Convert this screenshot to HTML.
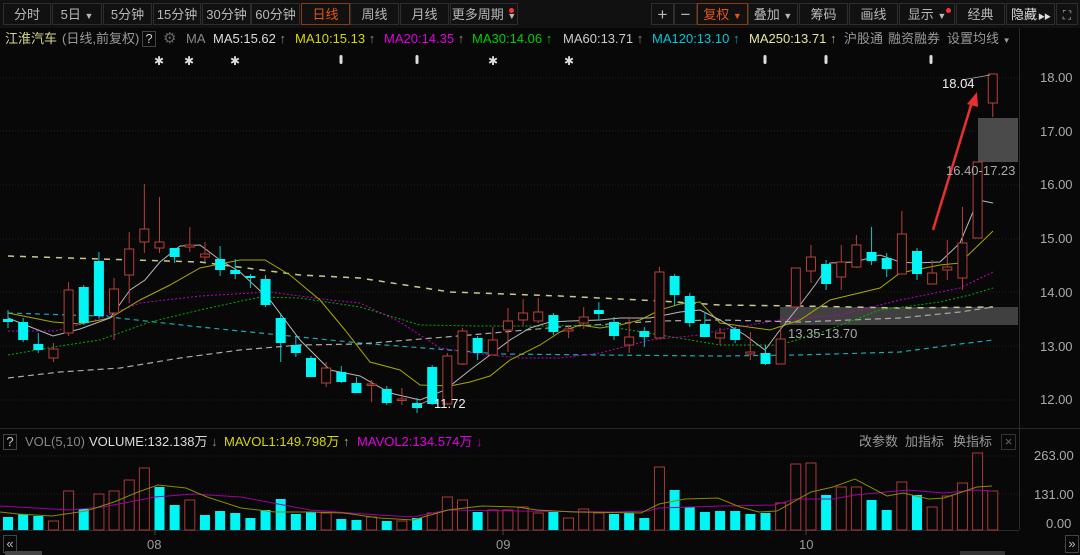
<!DOCTYPE html>
<html><head><meta charset="utf-8">
<style>
html,body{margin:0;padding:0;background:#080808;width:1080px;height:555px;overflow:hidden;font-family:"Liberation Sans","Noto Sans CJK SC",sans-serif;}
#c{position:absolute;left:0;top:0}
.tb{position:absolute;top:3px;height:22px;border:1px solid #2e2e2e;background:#111;color:#b8b8b8;font-size:13px;line-height:22px;text-align:center;box-sizing:border-box;white-space:nowrap;overflow:hidden}
.act{border-color:#8a3a10;color:#e0561a}
.t{position:absolute;font-size:13px;white-space:nowrap;line-height:16px}
</style></head><body>
<svg id="c" width="1080" height="555" xmlns="http://www.w3.org/2000/svg"></svg>

<div class="tb" style="left:3px;width:48px">分时</div>
<div class="tb" style="left:52px;width:50px">5日 <span style="font-size:9px">▼</span></div>
<div class="tb" style="left:103px;width:49px">5分钟</div>
<div class="tb" style="left:153px;width:48px">15分钟</div>
<div class="tb" style="left:202px;width:49px">30分钟</div>
<div class="tb" style="left:251px;width:49px">60分钟</div>
<div class="tb act" style="left:301px;width:49px">日线</div>
<div class="tb" style="left:350px;width:49px">周线</div>
<div class="tb" style="left:400px;width:49px">月线</div>
<div class="tb" style="left:450px;width:68px">更多周期 <span style="font-size:9px">▼</span><span style="position:absolute;right:3px;top:4px;width:5px;height:5px;border-radius:3px;background:#f33"></span></div>
<div class="tb" style="left:651px;width:23px;font-size:17px">+</div>
<div class="tb" style="left:674px;width:23px;font-size:17px">−</div>
<div class="tb act" style="left:697px;width:51px">复权 <span style="font-size:9px">▼</span></div>
<div class="tb" style="left:748px;width:50px">叠加 <span style="font-size:9px">▼</span></div>
<div class="tb" style="left:799px;width:49px">筹码</div>
<div class="tb" style="left:849px;width:49px">画线</div>
<div class="tb" style="left:899px;width:56px">显示 <span style="font-size:9px">▼</span><span style="position:absolute;right:3px;top:4px;width:5px;height:5px;border-radius:3px;background:#f33"></span></div>
<div class="tb" style="left:956px;width:49px">经典</div>
<div class="tb" style="left:1006px;width:49px;color:#ddd;text-align:left;padding-left:4px">隐藏<span style="font-size:7px;letter-spacing:-1px"> ▶▶</span></div>
<div class="tb" style="left:1056px;width:22px;font-size:12px">⛶</div>

<div class="t" style="left:5px;top:31px;color:#d6d68a">江淮汽车</div>
<div class="t" style="left:62px;top:31px;color:#9a9a9a">(日线,前复权)</div>
<div class="t" style="left:142px;top:31px;color:#ccc;border:1px solid #444;width:12px;text-align:center;line-height:14px">?</div>
<div class="t" style="left:163px;top:31px;color:#666;font-size:15px">⚙</div>
<div class="t" style="left:186px;top:31px;color:#888">MA</div>
<div class="t" style="left:213px;top:31px;color:#ddd">MA5:15.62 <span style="color:#888">↑</span></div>
<div class="t" style="left:295px;top:31px;color:#d8d800">MA10:15.13 <span style="color:#888">↑</span></div>
<div class="t" style="left:384px;top:31px;color:#e000e0">MA20:14.35 <span style="color:#888">↑</span></div>
<div class="t" style="left:472px;top:31px;color:#00d000">MA30:14.06 <span style="color:#0c0">↑</span></div>
<div class="t" style="left:563px;top:31px;color:#ccc">MA60:13.71 <span style="color:#888">↑</span></div>
<div class="t" style="left:652px;top:31px;color:#00c8d8">MA120:13.10 <span style="color:#0aa">↑</span></div>
<div class="t" style="left:749px;top:31px;color:#e8e890">MA250:13.71 <span style="color:#aa8">↑</span></div>
<div class="t" style="left:844px;top:31px;color:#999">沪股通</div>
<div class="t" style="left:888px;top:31px;color:#999">融资融券</div>
<div class="t" style="left:947px;top:31px;color:#999">设置均线 <span style="font-size:8px">▼</span></div>

<div class="t" style="left:942px;top:76px;color:#eee">18.04</div>
<div class="t" style="left:946px;top:163px;color:#aaa">16.40-17.23</div>
<div class="t" style="left:788px;top:326px;color:#aaa">13.35-13.70</div>
<div class="t" style="left:434px;top:396px;color:#eee">11.72</div>

<div class="t" style="left:1040px;top:70px;color:#aaa">18.00</div>
<div class="t" style="left:1040px;top:124px;color:#aaa">17.00</div>
<div class="t" style="left:1040px;top:177px;color:#aaa">16.00</div>
<div class="t" style="left:1040px;top:231px;color:#aaa">15.00</div>
<div class="t" style="left:1040px;top:285px;color:#aaa">14.00</div>
<div class="t" style="left:1040px;top:339px;color:#aaa">13.00</div>
<div class="t" style="left:1040px;top:392px;color:#aaa">12.00</div>

<div class="t" style="left:3px;top:434px;color:#ccc;border:1px solid #444;width:12px;text-align:center;line-height:14px">?</div>
<div class="t" style="left:25px;top:434px;color:#888">VOL(5,10)</div>
<div class="t" style="left:89px;top:434px;color:#ddd">VOLUME:132.138万 <span style="color:#888">↓</span></div>
<div class="t" style="left:224px;top:434px;color:#d8d800">MAVOL1:149.798万 <span style="color:#aa8">↑</span></div>
<div class="t" style="left:357px;top:434px;color:#e000e0">MAVOL2:134.574万 <span style="color:#a0a">↓</span></div>
<div class="t" style="left:859px;top:434px;color:#999">改参数</div>
<div class="t" style="left:905px;top:434px;color:#999">加指标</div>
<div class="t" style="left:953px;top:434px;color:#999">换指标</div>
<div class="t" style="left:1001px;top:434px;color:#666;border:1px solid #333;width:13px;text-align:center;line-height:14px">×</div>
<div class="t" style="left:1034px;top:448px;color:#aaa">263.00</div>
<div class="t" style="left:1034px;top:487px;color:#aaa">131.00</div>
<div class="t" style="left:1046px;top:516px;color:#aaa">0.00</div>
<div class="t" style="left:147px;top:537px;color:#999">08</div>
<div class="t" style="left:496px;top:537px;color:#999">09</div>
<div class="t" style="left:799px;top:537px;color:#999">10</div>
<div class="t" style="left:3px;top:535px;color:#bbb;border:1px solid #444;width:12px;text-align:center">«</div>
<div class="t" style="left:1065px;top:535px;color:#bbb;border:1px solid #444;width:12px;text-align:center">»</div>

<script>
var S='';
function L(x1,y1,x2,y2,c,w,d){S+='<line x1="'+x1+'" y1="'+y1+'" x2="'+x2+'" y2="'+y2+'" stroke="'+c+'" stroke-width="'+(w||1)+'"'+(d?' stroke-dasharray="'+d+'"':'')+'/>';}
function P(pts,c,w,d){S+='<polyline fill="none" points="'+pts.map(function(p){return p.join(',')}).join(' ')+'" stroke="'+c+'" stroke-width="'+(w||1)+'"'+(d?' stroke-dasharray="'+d+'"':'')+'/>';}
S+='<rect x="0" y="0" width="1080" height="28" fill="#111"/>';
[78,131,185,239,292,346,400].forEach(function(y){L(0,y,1019,y,'#222',1,'1 2');});
[456,494].forEach(function(y){L(0,y,1019,y,'#222',1,'1 2');});
L(1019.5,28,1019.5,530,'#2a2a2a');
L(0,428.5,1080,428.5,'#2a2a2a');
L(0,530.5,1019,530.5,'#2a2a2a');
[155,503,806].forEach(function(x){L(x,530,x,535,'#444');});
S+='<rect x="5" y="551" width="37" height="4" fill="#444"/><rect x="960" y="551" width="45" height="4" fill="#333"/>';
S+='<rect x="780" y="307" width="238" height="18" fill="#4a4a4a" opacity="0.85"/>';
S+='<rect x="978" y="118" width="40" height="44" fill="#4a4a4a"/>';
P([[8,256],[100,259],[200,262],[300,275],[360,278],[450,292],[560,296],[660,301],[720,305],[800,306],[900,308],[993,307]],'#c8c890',1.5,'6 6');
P([[8,313],[100,316],[200,327],[300,337],[360,343],[500,354],[600,355],[720,356],[800,355],[900,352],[960,344],[993,340]],'#1aa8b8',1.2,'5 4');
P([[8,378],[60,372],[120,368],[180,358],[240,350],[300,345],[360,344],[470,335],[560,327],[660,321],[720,320],[800,322],[900,318],[960,312],[993,307]],'#aaa',1.2,'6 4');
P([[8,355],[60,346],[100,340],[150,322],[200,310],[260,297],[300,298],[360,307],[420,325],[480,326],[540,326],[600,325],[660,335],[720,345],[780,345],[820,333],[880,310],[940,302],[970,295],[993,288]],'#00b000',1,'2 2');
P([[8,331],[55,331],[90,322],[140,303],[200,296],[270,292],[330,300],[360,303],[400,322],[440,348],[480,354],[520,358],[560,358],[600,353],[650,340],[700,335],[720,330],[780,320],[840,315],[900,300],[960,288],[993,272]],'#c000c0',1,'2 2');
P([[8,313],[53,322],[80,324],[110,318],[140,300],[170,285],[200,268],[240,260],[265,260],[290,275],[320,300],[345,330],[370,362],[400,370],[420,385],[450,386],[470,382],[490,376],[510,360],[540,345],[560,332],[580,325],[600,328],[620,325],[640,320],[660,310],[680,304],[700,302],[720,323],[770,330],[800,320],[830,300],[880,288],[900,273],[940,265],[960,263],[993,231]],'#a8a800',1);
P([[8,318],[53,336],[80,329],[110,318],[130,290],[145,280],[160,262],[180,246],[200,245],[220,260],[240,272],[270,300],[300,340],[330,370],[360,376],[390,393],[420,400],[445,390],[470,370],[490,355],[510,340],[530,328],[550,322],[570,321],[600,320],[620,318],[650,318],[680,312],[700,310],[720,320],[745,335],[765,350],[780,330],[800,305],[815,285],[830,263],[855,262],[880,255],[900,262],[915,263],[940,262],[960,243],[978,200],[993,203]],'#b8b8b8',1);
var C=[['c',319,322,310,328],['c',322,340,318,342],['c',344,350,333,353],['r',349,358,343,362],['r',290,333,282,336],['c',287,323,285,325],['c',261,316,252,318],['r',289,313,278,340],['r',249,275,232,303],['r',229,242,184,253],['r',242,248,197,253],['c',248,257,252,263],['r',245,247,227,252],['r',254,257,242,262],['c',259,270,246,276],['c',270,274,259,279],['c',276,278,274,288],['c',279,305,275,307],['c',318,343,313,362],['c',345,353,337,357],['c',358,377,356,377],['r',368,383,362,387],['c',372,382,366,383],['c',383,393,377,393],
['r',384,385,380,402],['c',389,403,386,405],['r',399,400,388,405],['c',403,408,398,413],['c',367,404,365,405],['r',356,404,353,405],['r',331,364,328,365],['c',338,353,336,360],['r',340,355,327,355],['r',321,330,308,352],['r',313,320,299,325],['r',312,321,298,323],['c',315,332,313,335],['r',329,331,325,338],['r',317,323,307,329],['c',310,314,302,320],['c',322,336,317,340],['r',337,345,317,353],['c',331,337,327,347],['r',272,338,267,338],['c',276,295,274,306],['c',296,323,293,327],['c',324,337,312,337],
['r',333,338,328,345],['c',329,340,327,343],['r',352,354,332,360],['c',353,364,345,365],['r',339,364,327,364],['r',268,307,268,307],['r',257,271,245,283],['c',264,284,260,290],['r',262,277,245,290],['r',245,267,235,268],['c',252,261,227,265],['c',258,269,253,277],['r',234,274,211,274],['c',251,274,248,280],['r',273,284,260,284],['r',267,270,240,280],['r',243,278,207,290],['r',162,238,162,238],['r',74,103,74,117]];
var RC='#b8403a',CY='#00f5f5';
C.forEach(function(k,i){var x=8+15.15*i;
 L(x,k[3],x,k[4],k[0]=='r'?RC:'#0cc',1);
 var h=Math.max(k[2]-k[1],1.5);
 if(k[0]=='r')S+='<rect x="'+(x-4.5)+'" y="'+k[1]+'" width="9" height="'+h+'" fill="#080808" stroke="'+RC+'" stroke-width="1"/>';
 else S+='<rect x="'+(x-5)+'" y="'+k[1]+'" width="10" height="'+h+'" fill="'+CY+'"/>';
});
var V='cccrrcrrrrccrccccccccrccrcrcrrrcrrrrcrrrcccrcccccccrrrcrrccrcrrrrr';
var VH=[517,514,516,521,491,509,494,491,480,468,487,505,500,515,511,513,518,510,499,514,512,513,519,520,517,521,521,518,513,497,500,512,510,510,507,513,512,518,509,513,514,513,518,467,490,507,512,511,511,514,513,503,464,463,495,487,487,500,510,482,495,507,496,483,453,491];
VH.forEach(function(t,i){var x=8+15.15*i;
 if(V[i]=='r')S+='<rect x="'+(x-5)+'" y="'+t+'" width="10" height="'+(530-t)+'" fill="none" stroke="#a83a36" stroke-width="1"/>';
 else S+='<rect x="'+(x-5)+'" y="'+t+'" width="10" height="'+(530-t)+'" fill="'+CY+'"/>';
});
P([[0,506],[69,510],[103,507],[155,497],[193,494],[241,497],[310,510],[379,515],[413,517],[448,510],[517,511],[611,512],[648,511],[659,508],[722,506],[774,505],[796,499],[833,499],[855,495],[907,490],[944,493],[977,490],[992,491]],'#a000a0',1);
P([[0,512],[18,514],[52,516],[86,511],[114,502],[138,492],[158,485],[186,488],[207,497],[241,508],[275,512],[310,512],[344,513],[379,518],[413,520],[448,510],[482,506],[517,507],[537,510],[574,512],[641,513],[659,504],[685,499],[718,498],[740,507],[759,512],[777,511],[811,492],[833,487],[855,479],[887,496],[903,493],[929,499],[944,498],[977,487],[992,486]],'#8a8a00',1);
[159,189,235,493,569].forEach(function(x){S+='<text x="'+x+'" y="65" fill="#ddd" font-size="12" text-anchor="middle" font-family="DejaVu Sans">✱</text>';});
[341,417,765,826,931].forEach(function(x){S+='<rect x="'+(x-1.5)+'" y="55" width="3" height="9" rx="1.5" fill="#ddd"/>';});
L(933,230,972,102,'#e83030',2.5);
S+='<polygon points="977,92 967,104 978,107" fill="#e83030"/>';
L(962,80,990,75,'#aaa',0.8);L(423,403,432,399,'#aaa',0.8);L(423,403,415,407,'#aaa',0.8);
document.getElementById('c').innerHTML=S;
</script>
</body></html>
